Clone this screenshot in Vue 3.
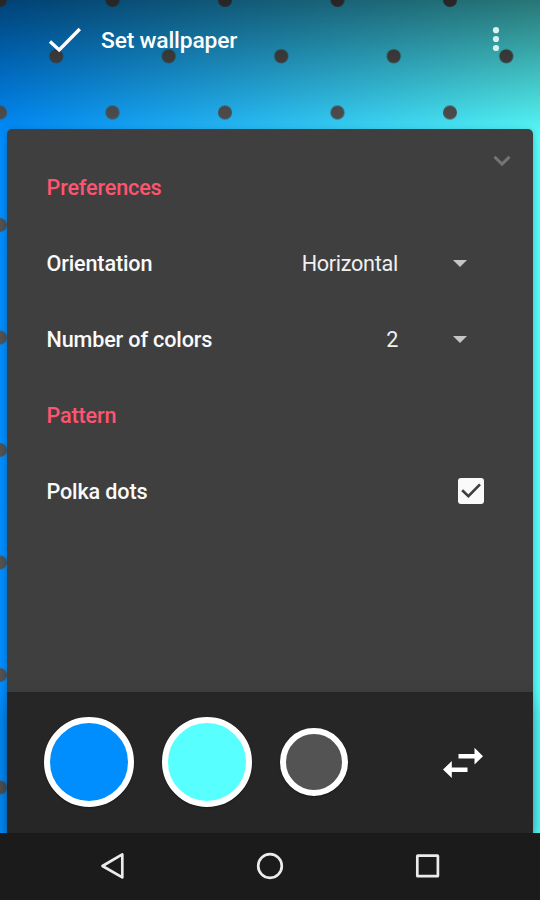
<script setup>
import { ref } from 'vue'

const preferences = ref([
  { name: 'Orientation', value: 'Horizontal' },
  { name: 'Number of colors', value: '2' }
])

const polkaDots = ref(true)

const swatches = [
  { id: 'first', color: '#008eff' },
  { id: 'second', color: '#57ffff' },
  { id: 'dots', color: '#535353', small: true }
]
</script>

<template>
  <div class="screen">
    <!-- wallpaper preview -->
    <svg class="wallpaper" width="540" height="833">
      <defs>
        <linearGradient id="colors">
          <stop offset="0" stop-color="#008eff" />
          <stop offset="1" stop-color="#57ffff" />
        </linearGradient>
        <linearGradient id="shade" x2="0" y2="1">
          <stop offset="0" stop-color="#000" stop-opacity="0.54" />
          <stop offset="1" stop-color="#000" stop-opacity="0" />
        </linearGradient>
        <pattern id="dots" width="112.5" height="112.5" patternUnits="userSpaceOnUse">
          <g fill="#535353">
            <circle cx="0" cy="0" r="7" />
            <circle cx="112.5" cy="0" r="7" />
            <circle cx="0" cy="112.5" r="7" />
            <circle cx="112.5" cy="112.5" r="7" />
            <circle cx="56.25" cy="56.25" r="7" />
          </g>
        </pattern>
      </defs>
      <rect width="540" height="833" fill="url(#colors)" />
      <rect width="540" height="833" fill="url(#dots)" />
      <rect width="540" height="140" fill="url(#shade)" />
    </svg>

    <header class="toolbar">
      <svg class="check" width="34" height="26" viewBox="0 0 34 26">
        <path d="M2 14.5 L11.2 23 L31.8 2" fill="none" stroke="#fff" stroke-width="3.4" />
      </svg>
      <h1>Set wallpaper</h1>
      <svg class="more" width="8" height="26" viewBox="0 0 8 26">
        <circle cx="4" cy="3.2" r="3.1" />
        <circle cx="4" cy="12" r="3.1" />
        <circle cx="4" cy="21" r="3.1" />
      </svg>
    </header>

    <main class="panel">
      <section class="settings">
        <svg class="collapse" width="18" height="12" viewBox="0 0 18 12">
          <path d="M1.5 1.8 L9 9.1 L16.5 1.8" fill="none" stroke="#747474" stroke-width="3" />
        </svg>
        <h2>Preferences</h2>
        <div v-for="item in preferences" :key="item.name" class="row">
          <span class="label">{{ item.name }}</span>
          <span class="value">{{ item.value }}</span>
          <svg class="arrow" width="14" height="7" viewBox="0 0 14 7">
            <path d="M0 0 H14 L7 7 Z" fill="#c5c5c5" />
          </svg>
        </div>
        <h2>Pattern</h2>
        <div class="row" @click="polkaDots = !polkaDots">
          <span class="label">Polka dots</span>
          <span class="checkbox">
            <svg v-if="polkaDots" width="26" height="26" viewBox="0 0 26 26">
              <path d="M4.2 12.3 L10.4 18.2 L22 6.4" fill="none" stroke="#3f3f3f" stroke-width="2.7" />
            </svg>
          </span>
        </div>
      </section>

      <footer class="palette">
        <button
          v-for="swatch in swatches"
          :key="swatch.id"
          :class="['swatch', { small: swatch.small }]"
          :style="{ backgroundColor: swatch.color }"
        ></button>
        <svg class="swap" width="40" height="31" viewBox="0 0 40 31">
          <path d="M15.5 6.9 H31.5 V0.7 L40 9.2 L31.5 17.5 V11.4 H15.5 Z" fill="#fff" />
          <path d="M24.5 20.4 H8.8 V14.1 L0 22.5 L8.8 31 V24.9 H24.5 Z" fill="#fff" />
        </svg>
      </footer>
    </main>

    <nav class="navbar">
      <svg width="28" height="28" viewBox="0 0 28 28">
        <path d="M3.5 14 L23.3 2.4 V25.4 Z" />
      </svg>
      <svg width="28" height="28" viewBox="0 0 28 28">
        <circle cx="14" cy="14" r="11.8" />
      </svg>
      <svg width="28" height="28" viewBox="0 0 28 28">
        <rect x="3.3" y="3.6" width="20.6" height="20.6" rx="0.5" />
      </svg>
    </nav>
  </div>
</template>

<style>
body {
  margin: 0;
}
</style>

<style scoped>
.screen {
  position: relative;
  display: flex;
  flex-direction: column;
  width: 540px;
  height: 900px;
  overflow: hidden;
  background: #1b1b1b;
  font-family: Roboto, "Liberation Sans", sans-serif;
  color: #fff;
}

/* the preview lies under everything else */
.wallpaper {
  position: absolute;
  top: 0;
  left: 0;
}

.toolbar {
  position: relative;
  display: flex;
  align-items: center;
  height: 80px;
  margin-bottom: 49px;
  padding: 0 40px 0 48px;
}

h1,
h2 {
  margin: 0;
  font-weight: 500;
}

h1 {
  flex: 1;
  margin-left: 19px;
  font-size: 22.8px;
  letter-spacing: -0.17px;
}

.more {
  fill: #d5f1f0;
}

.panel {
  position: relative;
  display: flex;
  flex-direction: column;
  height: 704px;
  margin: 0 7px;
  border-radius: 5px 5px 0 0;
  box-shadow: 0 3px 9px rgba(0, 0, 0, 0.3);
}

.settings {
  flex: 1;
  padding: 21px 48px 0 39.5px;
  background: #3f3f3f;
  border-radius: 5px 5px 0 0;
}

.collapse {
  position: absolute;
  top: 26px;
  right: 22px;
}

h2,
.row {
  height: 76px;
  font-size: 21.6px;
  line-height: 76px;
  letter-spacing: -0.15px;
}

h2 {
  color: #ff5470;
}

.row {
  display: flex;
  align-items: center;
}

.label {
  flex: 1;
  font-weight: 500;
  color: #fafafa;
}

.value {
  color: #f0f0f0;
  letter-spacing: -0.28px;
}

.arrow {
  margin: 0 18px 1px 55px;
}

.checkbox {
  width: 26px;
  height: 26px;
  margin: 0 1px 2px 0;
  border-radius: 3px;
  background: #fafafa;
}

.checkbox svg {
  display: block;
}

.palette {
  display: flex;
  align-items: center;
  gap: 28.3px;
  box-sizing: border-box;
  height: 141px;
  padding: 0 50px 1px 36.5px;
  background: #262626;
  box-shadow: 0 10px 20px rgba(0, 0, 0, 0.25);
}

.swatch {
  box-sizing: border-box;
  width: 90px;
  height: 90px;
  padding: 0;
  border: 6px solid #fff;
  border-radius: 50%;
  box-shadow: 0 1px 2px rgba(0, 0, 0, 0.4);
}

.swatch.small {
  width: 68px;
  height: 68px;
}

.swap {
  margin-left: auto;
}

.navbar {
  position: relative;
  display: flex;
  justify-content: center;
  gap: 129.5px;
  height: 67px;
  padding-top: 19px;
  box-sizing: border-box;
  background: #1b1b1b;
}

.navbar svg {
  fill: none;
  stroke: #ececec;
  stroke-width: 2.7;
  stroke-linejoin: round;
}
</style>
